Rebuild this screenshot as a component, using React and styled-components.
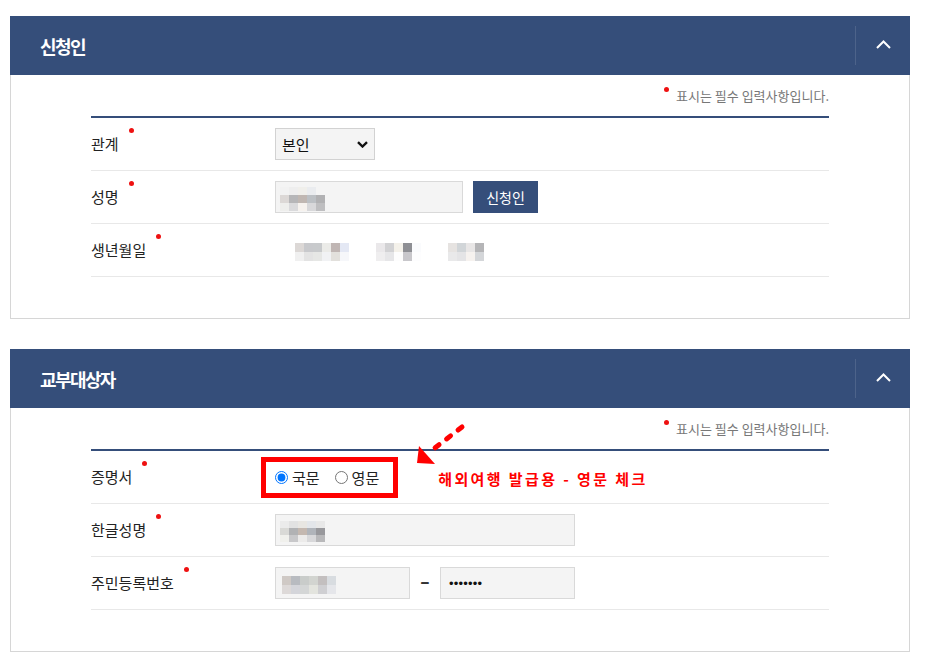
import styled, { createGlobalStyle } from "styled-components";

const NAVY = "#354e7a";

const GlobalStyle = createGlobalStyle`
  body {
    margin: 0;
    background: #fff;
    font-family: "Noto Sans CJK KR", "Noto Sans", sans-serif;
    color: #222;
  }
`;

// blurred (pixelated) personal data, one array per row
const NAME_1 = [
  ["#f2f2f2", "#eeeeee", "#f0efeb", "#eaecef", "#f4f4f4"],
  ["#dcd8d6", "#b6b6b8", "#c0b7b2", "#bcc0c4", "#b1b1b3"],
  ["#eeeeec", "#dadadc", "#f6f2ee", "#d8d8da", "#bebec0"],
];
const BIRTH_Y = [
  ["#dcd8d6", "#c8c9cc", "#c8cacc", "#ebebe8", "#c0b6b4", "#e4e8f4"],
  ["#f0f0f0", "#e3e3e3", "#e6e7e5", "#f1f2f4", "#e2e0dc", "#f6f7fa"],
];
const BIRTH_M = [
  ["#eae8ea", "#d2d2d4", "#f4f1ea", "#8e8f94", "#fafbfd"],
  ["#efeeef", "#e6e6e8", "#fdfdfd", "#c8c7cb", "#fdfdfe"],
];
const BIRTH_D = [
  ["#e6e3e1", "#d1d5d8", "#e8e6e6", "#b5b5b7"],
  ["#e9e9ea", "#e4e4e6", "#f6f2ef", "#d4d6d9"],
];
const NAME_2 = [
  ["#ebebeb", "#e2e2e2", "#e8e6e2", "#e3e6ea", "#e8e8e8"],
  ["#d9d9d6", "#b1b2b4", "#c4b8b0", "#b0b4ba", "#98989c"],
  ["#f0f0ec", "#c8c8ca", "#ecebea", "#d8d8da", "#b8b8ba"],
];
const RRN = [
  ["#cfc9c5", "#b8bbc0", "#c9ccca", "#d2d4d0", "#c3bfbf", "#d8dce0"],
  ["#ddd9d8", "#d4d5da", "#d4d6d6", "#e3e4de", "#cfcfd2", "#e5e6ea"],
];

const Blur = ({ rows, h = 9, ...rest }) => (
  <Mosaic $cols={rows[0].length} $h={h} {...rest}>
    {rows.flat().map((c, i) => (
      <Cell key={i} style={{ background: c }} />
    ))}
  </Mosaic>
);

const ChevronUp = () => (
  <svg width="15" height="9" viewBox="0 0 15 9" fill="none">
    <path d="M1 8L7.5 1.5L14 8" stroke="#fff" strokeWidth="2" />
  </svg>
);

const ChevronDown = () => (
  <svg width="11" height="7" viewBox="0 0 11 7" fill="none">
    <path d="M1 1.2L5.5 5.5L10 1.2" stroke="#111" strokeWidth="2.4" />
  </svg>
);

const Arrow = () => (
  <ArrowSvg width="55" height="48" viewBox="0 0 55 48">
    <path
      d="M49 7L18 31"
      stroke="#ff0000"
      strokeWidth="5"
      strokeLinecap="round"
      strokeDasharray="5 9.5"
    />
    <polygon points="4,43 6,26 22,44" fill="#ff0000" />
  </ArrowSvg>
);

const Panel = ({ title, children }) => (
  <Section>
    <Header>
      <Title>{title}</Title>
      <Toggle>
        <ChevronUp />
      </Toggle>
    </Header>
    <Body>
      <Note>
        <Dot />
        표시는 필수 입력사항입니다.
      </Note>
      <Table>{children}</Table>
    </Body>
  </Section>
);

const Row = ({ label, children }) => (
  <RowWrap>
    <Label>
      <Req>{label}</Req>
    </Label>
    <Value>{children}</Value>
  </RowWrap>
);

export default function App() {
  return (
    <>
      <GlobalStyle />
      <Page>
        <Panel title="신청인">
          <Row label="관계">
            <Select>
              <span>본인</span>
              <ChevronDown />
            </Select>
          </Row>
          <Row label="성명">
            <Field $w={188}>
              <Blur rows={NAME_1} h={8} />
            </Field>
            <NavyButton>신청인</NavyButton>
          </Row>
          <Row label="생년월일">
            <Blur rows={BIRTH_Y} $ml={20} />
            <Blur rows={BIRTH_M} $ml={27} />
            <Blur rows={BIRTH_D} $ml={27} />
          </Row>
        </Panel>

        <Panel title="교부대상자">
          <Row label="증명서">
            <RedBox>
              <Radio>
                <input type="radio" name="lang" defaultChecked />
                국문
              </Radio>
              <Radio>
                <input type="radio" name="lang" />
                영문
              </Radio>
            </RedBox>
            <Annotation>
              <Arrow />
              해외여행 발급용 - 영문 체크
            </Annotation>
          </Row>
          <Row label="한글성명">
            <Field $w={300}>
              <Blur rows={NAME_2} h={7} />
            </Field>
          </Row>
          <Row label="주민등록번호">
            <Field $w={135} $pl={6}>
              <Blur rows={RRN} />
            </Field>
            <Dash>–</Dash>
            <Field $w={135} $pl={8}>
              <Secret>•••••••</Secret>
            </Field>
          </Row>
        </Panel>
      </Page>
    </>
  );
}

const Page = styled.div`
  width: 900px;
  padding: 16px 15px 0 10px;
`;

const Section = styled.section`
  & + & {
    margin-top: 30px;
  }
`;

const Header = styled.div`
  display: flex;
  align-items: center;
  height: 59px;
  padding-left: 30px;
  background: ${NAVY};
`;

const Title = styled.h2`
  flex: 1;
  margin: 0;
  color: #fff;
  font-size: 18px;
  font-weight: 700;
  letter-spacing: -1.6px;
`;

const Toggle = styled.button`
  display: flex;
  align-items: center;
  justify-content: center;
  width: 55px;
  height: 39px;
  padding: 0 0 3px;
  border: none;
  border-left: 1px solid rgba(255, 255, 255, 0.12);
  background: transparent;
  cursor: pointer;
`;

const Body = styled.div`
  padding: 11px 80px 41px;
  border: 1px solid #d6d6d6;
  border-top: none;
`;

const Dot = styled.span`
  display: inline-block;
  width: 5px;
  height: 5px;
  margin-right: 7px;
  vertical-align: top;
  margin-top: 1px;
  border-radius: 50%;
  background: #ee1111;
`;

const Note = styled.div`
  margin-bottom: 10px;
  text-align: right;
  font-size: 13px;
  line-height: 20px;
  color: #777;
`;

const Table = styled.div`
  border-top: 2px solid ${NAVY};
`;

const RowWrap = styled.div`
  display: flex;
  align-items: center;
  height: 53px;
  box-sizing: border-box;
  border-bottom: 1px solid #e8e8e8;
`;

const Label = styled.div`
  width: 184px;
  flex-shrink: 0;
  font-size: 15px;
  line-height: 22px;
  color: #222;
`;

const Req = styled.span`
  position: relative;
  &::after {
    content: "";
    position: absolute;
    top: -5px;
    right: -15px;
    width: 5px;
    height: 5px;
    border-radius: 50%;
    background: #ee1111;
  }
`;

const Value = styled.div`
  display: flex;
  align-items: center;
`;

const Select = styled.div`
  display: flex;
  align-items: center;
  justify-content: space-between;
  width: 100px;
  height: 32px;
  box-sizing: border-box;
  padding: 0 6px;
  background: #f4f4f4;
  border: 1px solid #d2d2d2;
  font-size: 15px;
  color: #111;
`;

const Field = styled.div`
  display: flex;
  align-items: center;
  width: ${(p) => p.$w}px;
  height: 32px;
  box-sizing: border-box;
  padding-left: ${(p) => p.$pl ?? 4}px;
  background: #f4f4f4;
  border: 1px solid #d9d9d9;
`;

const Mosaic = styled.div`
  display: grid;
  grid-template-columns: repeat(${(p) => p.$cols}, 9px);
  grid-auto-rows: ${(p) => p.$h}px;
  margin-left: ${(p) => p.$ml ?? 0}px;
  margin-top: 3px;
`;

const Cell = styled.span`
  display: block;
`;

const NavyButton = styled.button`
  width: 65px;
  height: 32px;
  margin-left: 10px;
  border: none;
  background: ${NAVY};
  color: #fff;
  font-family: inherit;
  font-size: 14px;
  cursor: pointer;
`;

const RedBox = styled.div`
  display: flex;
  align-items: center;
  gap: 15px;
  height: 41px;
  box-sizing: border-box;
  margin-left: -14px;
  padding: 0 14px 0 9px;
  border: 5px solid #ff0000;
`;

const Radio = styled.label`
  display: flex;
  align-items: center;
  gap: 4px;
  font-size: 15px;
  color: #222;

  input {
    width: 13px;
    height: 13px;
    margin: 0;
  }
`;

const Annotation = styled.span`
  position: relative;
  margin-left: 40px;
  margin-top: 3px;
  font-size: 15px;
  line-height: 20px;
  font-weight: 700;
  letter-spacing: 2.4px;
  color: #ff0000;
`;

const ArrowSvg = styled.svg`
  position: absolute;
  left: -25px;
  top: -49px;
`;

const Dash = styled.span`
  width: 30px;
  margin-bottom: 5px;
  text-align: center;
  font-size: 17px;
  font-weight: 900;
  color: #333;
`;

const Secret = styled.span`
  font-family: "Liberation Sans", Arial, sans-serif;
  font-size: 13px;
  letter-spacing: 0.2px;
  color: #111;
`;
